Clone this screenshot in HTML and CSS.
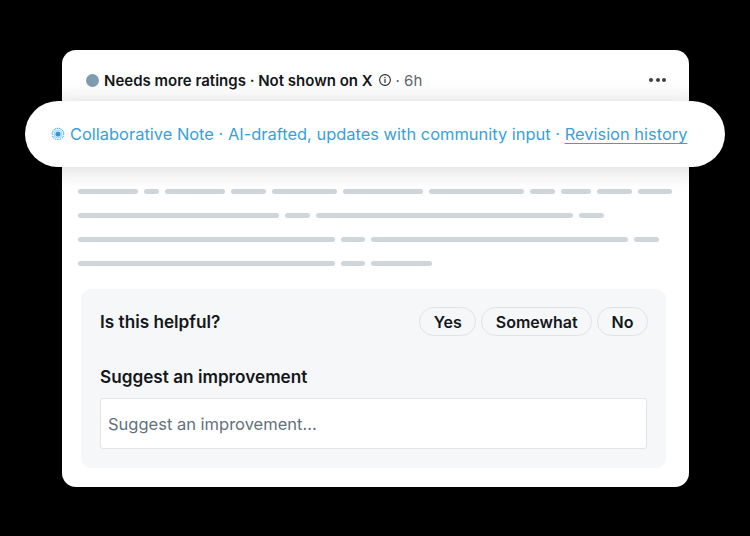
FILE: index.html
```html
<!DOCTYPE html>
<html lang="en">
<head>
<meta charset="utf-8">
<title>Collaborative Note</title>
<link rel="stylesheet" href="styles.css">
</head>
<body>
<main class="card">
  <header class="status">
    <span class="dot"></span>
    <strong class="status-title">Needs more ratings · Not shown on X</strong>
    <svg class="info" viewBox="0 0 14 14" width="14" height="14" aria-hidden="true">
      <circle cx="7" cy="7" r="5.4" fill="none" stroke="#26292d" stroke-width="1.1"/>
      <rect x="6.4" y="6.1" width="1.2" height="3.8" fill="#26292d"/>
      <rect x="6.4" y="3.9" width="1.2" height="1.3" fill="#26292d"/>
    </svg>
    <span class="time">· 6h</span>
    <span class="more"><i></i><i></i><i></i></span>
  </header>

  <div class="banner">
    <svg class="spark" viewBox="0 0 14 14" width="14" height="14" aria-hidden="true">
      <circle cx="7" cy="7" r="5.7" fill="none" stroke="#1d9bf0" stroke-width="1.1" stroke-dasharray="1 .8"/>
      <circle cx="7" cy="7" r="3.9" fill="none" stroke="#7cc4f0" stroke-width=".8"/>
      <circle cx="7" cy="7" r="2.6" fill="#2a9ad8"/>
    </svg>
    <span>Collaborative Note · AI-drafted, updates with community input · <a class="history" href="#">Revision history</a></span>
  </div>

  <section class="lines">
    <div class="line"><i class="w60"></i><i class="w15"></i><i class="w60"></i><i class="w35"></i><i class="w65"></i><i class="w80"></i><i class="w95"></i><i class="w25"></i><i class="w30"></i><i class="w35"></i><i class="w34"></i></div>
    <div class="line"><i class="w201"></i><i class="w25"></i><i class="w257"></i><i class="w25"></i></div>
    <div class="line"><i class="w257"></i><i class="w24"></i><i class="w257"></i><i class="w25"></i></div>
    <div class="line"><i class="w257"></i><i class="w24"></i><i class="w61"></i></div>
  </section>

  <section class="panel">
    <div class="question">
      <h2 class="label">Is this helpful?</h2>
      <div class="choices">
        <button class="chip" type="button">Yes</button>
        <button class="chip" type="button">Somewhat</button>
        <button class="chip" type="button">No</button>
      </div>
    </div>
    <h2 class="label suggest">Suggest an improvement</h2>
    <div class="input">Suggest an improvement...</div>
  </section>
</main>
</body>
</html>
```
FILE: styles.css
```css
* { box-sizing: border-box; }
html, body { height: 100%; }
body {
  margin: 0;
  background: #000;
  font-family: Inter, "Liberation Sans", sans-serif;
  padding: 50px 61px 49px 62px;
  overflow: hidden;
}
.card {
  position: relative;
  width: 627px;
  height: 437px;
  background: #fff;
  border-radius: 14px;
  padding: 0 23px 19px 19px;
  display: flex;
  flex-direction: column;
}
.status {
  height: 51px;
  margin: 0 -4px 0 5px;
  padding-top: 9px;
  display: flex;
  align-items: center;
  font-size: 15px;
  color: #14171a;
}
.dot {
  width: 13px;
  height: 13px;
  border-radius: 50%;
  background: #7f9cb0;
  margin-right: 5px;
}
.status-title { font-weight: 600; }
.info { margin-left: 5px; }
.time { margin-left: 4px; color: #5b6670; font-weight: 400; }
.more { margin-left: auto; margin-right: 4px; display: flex; gap: 2.5px; }
.more i { width: 4px; height: 4px; border-radius: 50%; background: #3c4247; }
.banner {
  position: absolute;
  left: -37px;
  top: 51px;
  width: 700px;
  height: 66px;
  border-radius: 33px;
  background: #fff;
  box-shadow: 0 2px 24px rgba(0, 0, 0, .16);
  display: flex;
  align-items: center;
  gap: 5px;
  padding-left: 26px;
  color: #3a9fd8;
  font-size: 16.45px;
  white-space: nowrap;
}
.spark { flex: none; }
.history { color: #3a9fd8; text-decoration: underline; text-underline-offset: 3px; }
.lines {
  margin: 88px 0 0 -3px;
  display: flex;
  flex-direction: column;
  gap: 19px;
}
.line { display: flex; gap: 6px; height: 5px; }
.line i { display: block; flex: none; height: 5px; border-radius: 3px; background: #cfd6da; }
.w15 { width: 15px; }
.w24 { width: 24px; }
.w25 { width: 25px; }
.w30 { width: 30px; }
.w34 { width: 34px; }
.w35 { width: 35px; }
.w60 { width: 60px; }
.w61 { width: 61px; }
.w65 { width: 65px; }
.w80 { width: 80px; }
.w95 { width: 95px; }
.w201 { width: 201px; }
.w257 { width: 257px; }
.panel {
  margin-top: 23px;
  width: 585px;
  height: 179px;
  background: #f5f7f9;
  border-radius: 10px;
  padding: 18px 18px 19px 19px;
}
.question {
  display: flex;
  align-items: center;
  justify-content: space-between;
  height: 29px;
}
.label {
  margin: 0;
  font-size: 17.2px;
  line-height: 20px;
  font-weight: 600;
  color: #14171a;
}
.choices { display: flex; gap: 5px; }
.chip {
  height: 29px;
  padding: 0 13.5px;
  border: 1.5px solid #e0e3e6;
  border-radius: 15px;
  background: #f5f7f9;
  font-family: inherit;
  font-size: 16px;
  font-weight: 600;
  color: #14171a;
}
.suggest { margin-top: 31px; }
.input {
  margin-top: 11px;
  width: 547px;
  height: 51px;
  background: #fff;
  border: 1px solid #e1e5e8;
  border-radius: 3px;
  padding-left: 7px;
  display: flex;
  align-items: center;
  font-size: 16.5px;
  color: #63717d;
}
```
